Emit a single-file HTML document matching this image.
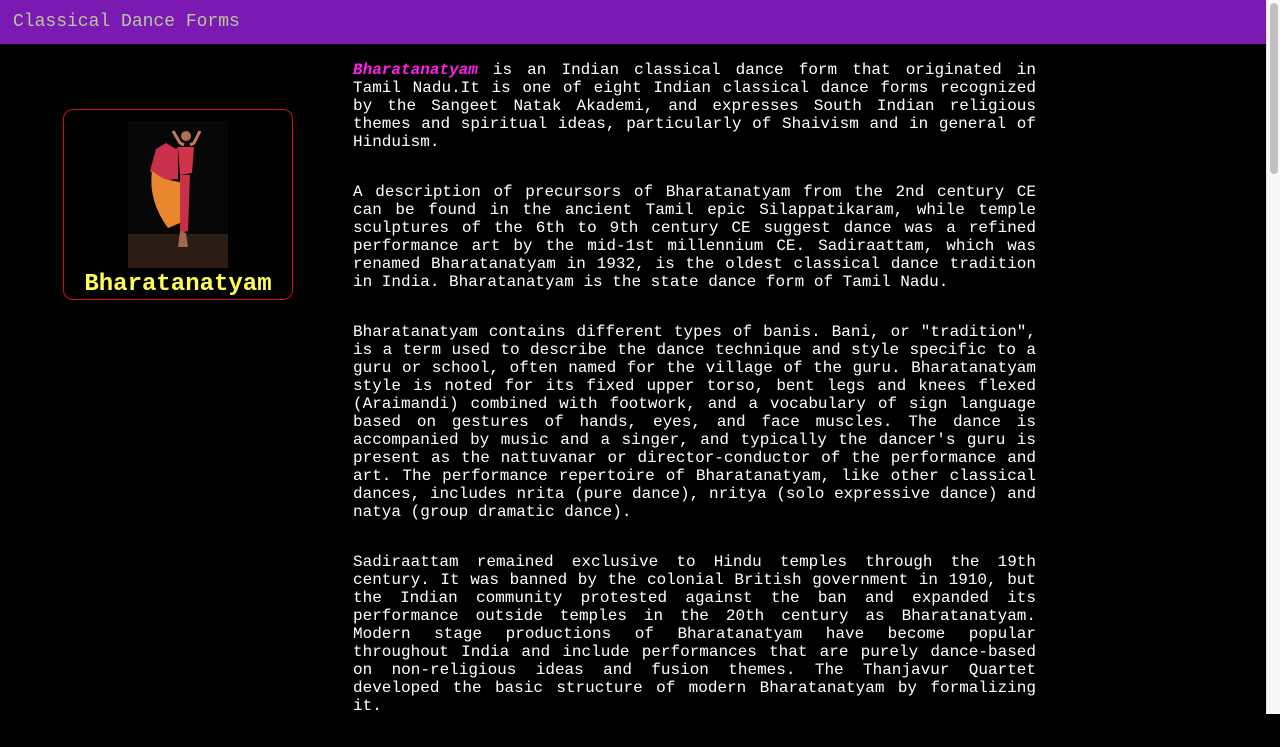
<!DOCTYPE html>
<html><head><meta charset="utf-8"><style>
html,body{margin:0;padding:0;background:#000;overflow:hidden;height:714px;}
body{font-family:"Liberation Mono","Courier New",monospace;}
.hdr{position:absolute;left:0;top:0;width:1253px;height:44px;background:#7b19b3;color:#b7c79a;font-size:18px;line-height:44px;padding-left:13px;}
.sb{position:absolute;left:1266px;top:0;width:14px;height:714px;background:#f8f8f8;border-left:1px solid #e8e8e8;box-sizing:border-box;}
.sb div{position:absolute;left:3px;top:3px;width:8px;height:171px;background:#c1c1c1;border-radius:4px;}
.card{position:absolute;left:63px;top:109px;width:228px;height:189px;border:1px solid #d0101a;border-radius:10px;}
.card svg{position:absolute;left:64px;top:11px;}
.cap{position:absolute;left:0;right:0;top:162px;text-align:center;color:#ffff55;font-weight:bold;font-size:24px;line-height:26px;}
.main{position:absolute;left:353px;top:61px;width:683px;color:#fff;font-size:16px;line-height:18px;text-align:justify;}
.main p{margin:0 0 32px 0;}
.b{color:#ff1ee8;font-weight:bold;font-style:italic;}
</style></head><body>
<div class="hdr">Classical Dance Forms</div>
<div class="sb"><div></div></div>
<div class="card">
<svg width="100" height="147" viewBox="0 0 100 147">
<rect width="100" height="147" fill="#070707"/>
<rect x="0" y="113" width="100" height="34" fill="#2b1c14"/>
<circle cx="58" cy="15" r="5" fill="#b07055"/>
<path d="M45 10 L52 22 L56 24 M72 10 L66 22 L62 24" stroke="#c27a5a" stroke-width="3" fill="none"/>
<path d="M50 26 L66 26 L64 52 L52 54 Z" fill="#d0334a"/>
<path d="M50 26 L48 28 L38 22 L28 28 L22 50 L30 60 L50 58 Z" fill="#c8304c"/>
<path d="M24 50 Q20 80 40 107 L52 102 L56 62 L36 58 Z" fill="#e9862e"/>
<path d="M52 54 L62 54 L60 110 L52 112 Z" fill="#c8304a"/>
<path d="M52 110 L58 112 L60 126 L50 126 Z" fill="#a06850"/>
</svg>
<div class="cap">Bharatanatyam</div>
</div>
<div class="main">
<p><span class="b">Bharatanatyam</span> is an Indian classical dance form that originated in Tamil Nadu.It is one of eight Indian classical dance forms recognized by the Sangeet Natak Akademi, and expresses South Indian religious themes and spiritual ideas, particularly of Shaivism and in general of Hinduism.</p>
<p>A description of precursors of Bharatanatyam from the 2nd century CE can be found in the ancient Tamil epic Silappatikaram, while temple sculptures of the 6th to 9th century CE suggest dance was a refined performance art by the mid-1st millennium CE. Sadiraattam, which was renamed Bharatanatyam in 1932, is the oldest classical dance tradition in India. Bharatanatyam is the state dance form of Tamil Nadu.</p>
<p>Bharatanatyam contains different types of banis. Bani, or "tradition", is a term used to describe the dance technique and style specific to a guru or school, often named for the village of the guru. Bharatanatyam style is noted for its fixed upper torso, bent legs and knees flexed (Araimandi) combined with footwork, and a vocabulary of sign language based on gestures of hands, eyes, and face muscles. The dance is accompanied by music and a singer, and typically the dancer's guru is present as the nattuvanar or director-conductor of the performance and art. The performance repertoire of Bharatanatyam, like other classical dances, includes nrita (pure dance), nritya (solo expressive dance) and natya (group dramatic dance).</p>
<p>Sadiraattam remained exclusive to Hindu temples through the 19th century. It was banned by the colonial British government in 1910, but the Indian community protested against the ban and expanded its performance outside temples in the 20th century as Bharatanatyam. Modern stage productions of Bharatanatyam have become popular throughout India and include performances that are purely dance-based on non-religious ideas and fusion themes. The Thanjavur Quartet developed the basic structure of modern Bharatanatyam by formalizing it.</p>
</div>
</body></html>
